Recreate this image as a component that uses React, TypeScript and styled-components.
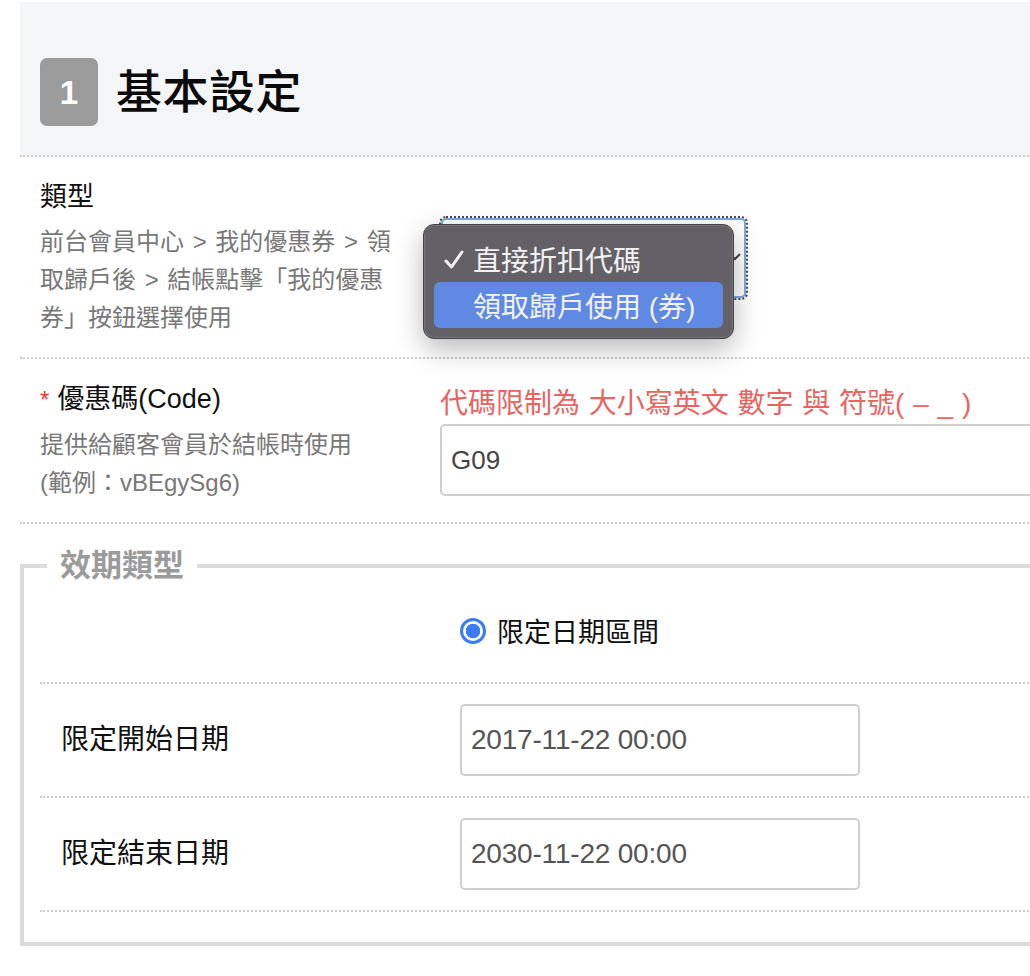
import React from "react";
import styled, { createGlobalStyle } from "styled-components";

const FONT = `"Liberation Sans", "Noto Sans CJK TC", "Noto Sans CJK SC", sans-serif`;

const Global = createGlobalStyle`
  html, body { margin: 0; padding: 0; background: #fff; overflow: hidden; }
  body { font-family: ${FONT}; color: #111; }
  * { box-sizing: border-box; }
`;

const Page = styled.div`
  margin: 2px 0 0 20px;
  width: 1120px;
`;

const Header = styled.header`
  display: flex;
  align-items: center;
  gap: 18px;
  padding: 56px 20px 29px;
  background: #f4f5f7;
  border-bottom: 2px dotted #cdcdcd;
`;

const Badge = styled.div`
  width: 58px;
  height: 68px;
  border-radius: 7px;
  background: #9b9b9b;
  color: #fff;
  font-size: 33px;
  font-weight: 700;
  display: flex;
  align-items: center;
  justify-content: center;
  padding-top: 2px;
`;

const Title = styled.h1`
  margin: 0;
  font-size: 46px;
  font-weight: 500;
  line-height: 60px;
  letter-spacing: 0.5px;
  color: #0a0a0a;
`;

const FormRow = styled.div`
  display: grid;
  grid-template-columns: 400px 1fr;
  align-items: center;
  padding: 22px 0 20px 20px;
  border-bottom: 2px dotted #cdcdcd;
`;

const LabelCol = styled.div`
  display: flex;
  flex-direction: column;
  gap: 8px;
`;

const Label = styled.div`
  font-size: 27px;
  line-height: 36px;
  color: #111;
`;

const Required = styled.span`
  color: #e8392f;
  margin-right: 8px;
  font-size: 24px;
`;

const Desc = styled.div`
  font-size: 24px;
  line-height: 38px;
  color: #787878;
  word-spacing: 2px;
`;

const FieldCol = styled.div`
  position: relative;
  display: flex;
  flex-direction: column;
  gap: 3px;
`;

const SelectBox = styled.div`
  position: relative;
  width: 305px;
  height: 80px;
  margin-left: 1px;
  border: 2px solid #7aa9e2;
  border-radius: 5px;
  outline: 2px dotted #4a4a4a;
  outline-offset: 0px;
  background: #fff;
`;

const Chevron = styled.svg`
  position: absolute;
  right: 3px;
  top: 32px;
`;

const Menu = styled.div`
  position: absolute;
  left: -20px;
  top: 4px;
  width: 311px;
  padding: 11px 10px 10px;
  background: #636166;
  border: 1px solid #454447;
  box-shadow: inset 0 0 0 1px #77757a, 0 10px 28px rgba(0, 0, 0, 0.28);
  border-radius: 11px;
  z-index: 2;
`;

const MenuItem = styled.div<{ $active?: boolean }>`
  position: relative;
  height: 46px;
  display: flex;
  align-items: center;
  padding-left: 39px;
  border-radius: 6px;
  font-size: 28px;
  color: #f2f2f2;
  background: ${(p) => (p.$active ? "#6089e4" : "transparent")};
  white-space: nowrap;
`;

const Check = styled.svg`
  position: absolute;
  left: 10px;
  top: 14px;
`;

const Hint = styled.div`
  font-size: 28px;
  line-height: 34px;
  color: #e76461;
  white-space: nowrap;
  word-spacing: 1px;
`;

const TextInput = styled.div<{ $width: number }>`
  width: ${(p) => p.$width}px;
  height: 72px;
  border: 2px solid #cfcfcf;
  border-radius: 5px;
  display: flex;
  align-items: center;
  padding-left: 9px;
  font-size: 26px;
  color: #444;
  background: #fff;
`;

const DateText = styled.span`
  font-size: 28px;
  color: #555;
  letter-spacing: -0.2px;
`;

const Fieldset = styled.fieldset`
  margin: 24px 0 0 0;
  padding: 0 0 30px 16px;
  border: 4px solid #dcdcdc;
  min-width: 0;
`;

const Legend = styled.legend`
  margin-left: 7px;
  padding: 0 13px;
  font-size: 31px;
  line-height: 36px;
  font-weight: 700;
  color: #9b9b9b;
`;

const InnerRow = styled.div<{ $pad: number }>`
  display: grid;
  grid-template-columns: 399px 1fr;
  align-items: center;
  padding: ${(p) => p.$pad}px 0 ${(p) => p.$pad}px 21px;
  border-bottom: 2px dotted #cdcdcd;
`;

const RowLabel = styled.div`
  font-size: 28px;
  line-height: 36px;
  color: #111;
`;

const RadioWrap = styled.label`
  display: flex;
  align-items: center;
  gap: 11px;
  font-size: 27px;
  line-height: 36px;
  color: #111;
`;

const RadioDot = styled.span`
  width: 26px;
  height: 26px;
  border-radius: 50%;
  border: 3px solid #3b7cf6;
  background: radial-gradient(circle, #3b7cf6 0 7px, #fff 7.5px);
  margin-top: -5px;
`;

const descType = ["前台會員中心 > 我的優惠券 > 領", "取歸戶後 > 結帳點擊「我的優惠", "券」按鈕選擇使用"];

export default function App() {
  return (
    <>
      <Global />
      <Page>
        <Header>
          <Badge>1</Badge>
          <Title>基本設定</Title>
        </Header>

        <FormRow>
          <LabelCol>
            <Label>類型</Label>
            <Desc>
              {descType.map((l, i) => (
                <div key={i}>{l}</div>
              ))}
            </Desc>
          </LabelCol>
          <FieldCol>
            <SelectBox>
              <Chevron width="12" height="10" viewBox="0 0 12 10">
                <path d="M1 2 L6 7 L11 2" fill="none" stroke="#444" strokeWidth="2" />
              </Chevron>
              <Menu>
                <MenuItem>
                  <Check width="20" height="20" viewBox="0 0 20 20">
                    <path d="M2 11 L7.5 17 L18 2" fill="none" stroke="#f2f2f2" strokeWidth="3" strokeLinecap="round" strokeLinejoin="round" />
                  </Check>
                  直接折扣代碼
                </MenuItem>
                <MenuItem $active>領取歸戶使用 (券)</MenuItem>
              </Menu>
            </SelectBox>
          </FieldCol>
        </FormRow>

        <FormRow>
          <LabelCol>
            <Label>
              <Required>*</Required>優惠碼(Code)
            </Label>
            <Desc>
              <div>提供給顧客會員於結帳時使用</div>
              <div>(範例：vBEgySg6)</div>
            </Desc>
          </LabelCol>
          <FieldCol>
            <Hint>代碼限制為 大小寫英文 數字 與 符號( – _ )</Hint>
            <TextInput $width={640}>G09</TextInput>
          </FieldCol>
        </FormRow>

        <Fieldset>
          <Legend>效期類型</Legend>
          <InnerRow $pad={31}>
            <div />
            <RadioWrap>
              <RadioDot />
              限定日期區間
            </RadioWrap>
          </InnerRow>
          <InnerRow $pad={20}>
            <RowLabel>限定開始日期</RowLabel>
            <TextInput $width={400}>
              <DateText>2017-11-22 00:00</DateText>
            </TextInput>
          </InnerRow>
          <InnerRow $pad={20}>
            <RowLabel>限定結束日期</RowLabel>
            <TextInput $width={400}>
              <DateText>2030-11-22 00:00</DateText>
            </TextInput>
          </InnerRow>
        </Fieldset>
      </Page>
    </>
  );
}
